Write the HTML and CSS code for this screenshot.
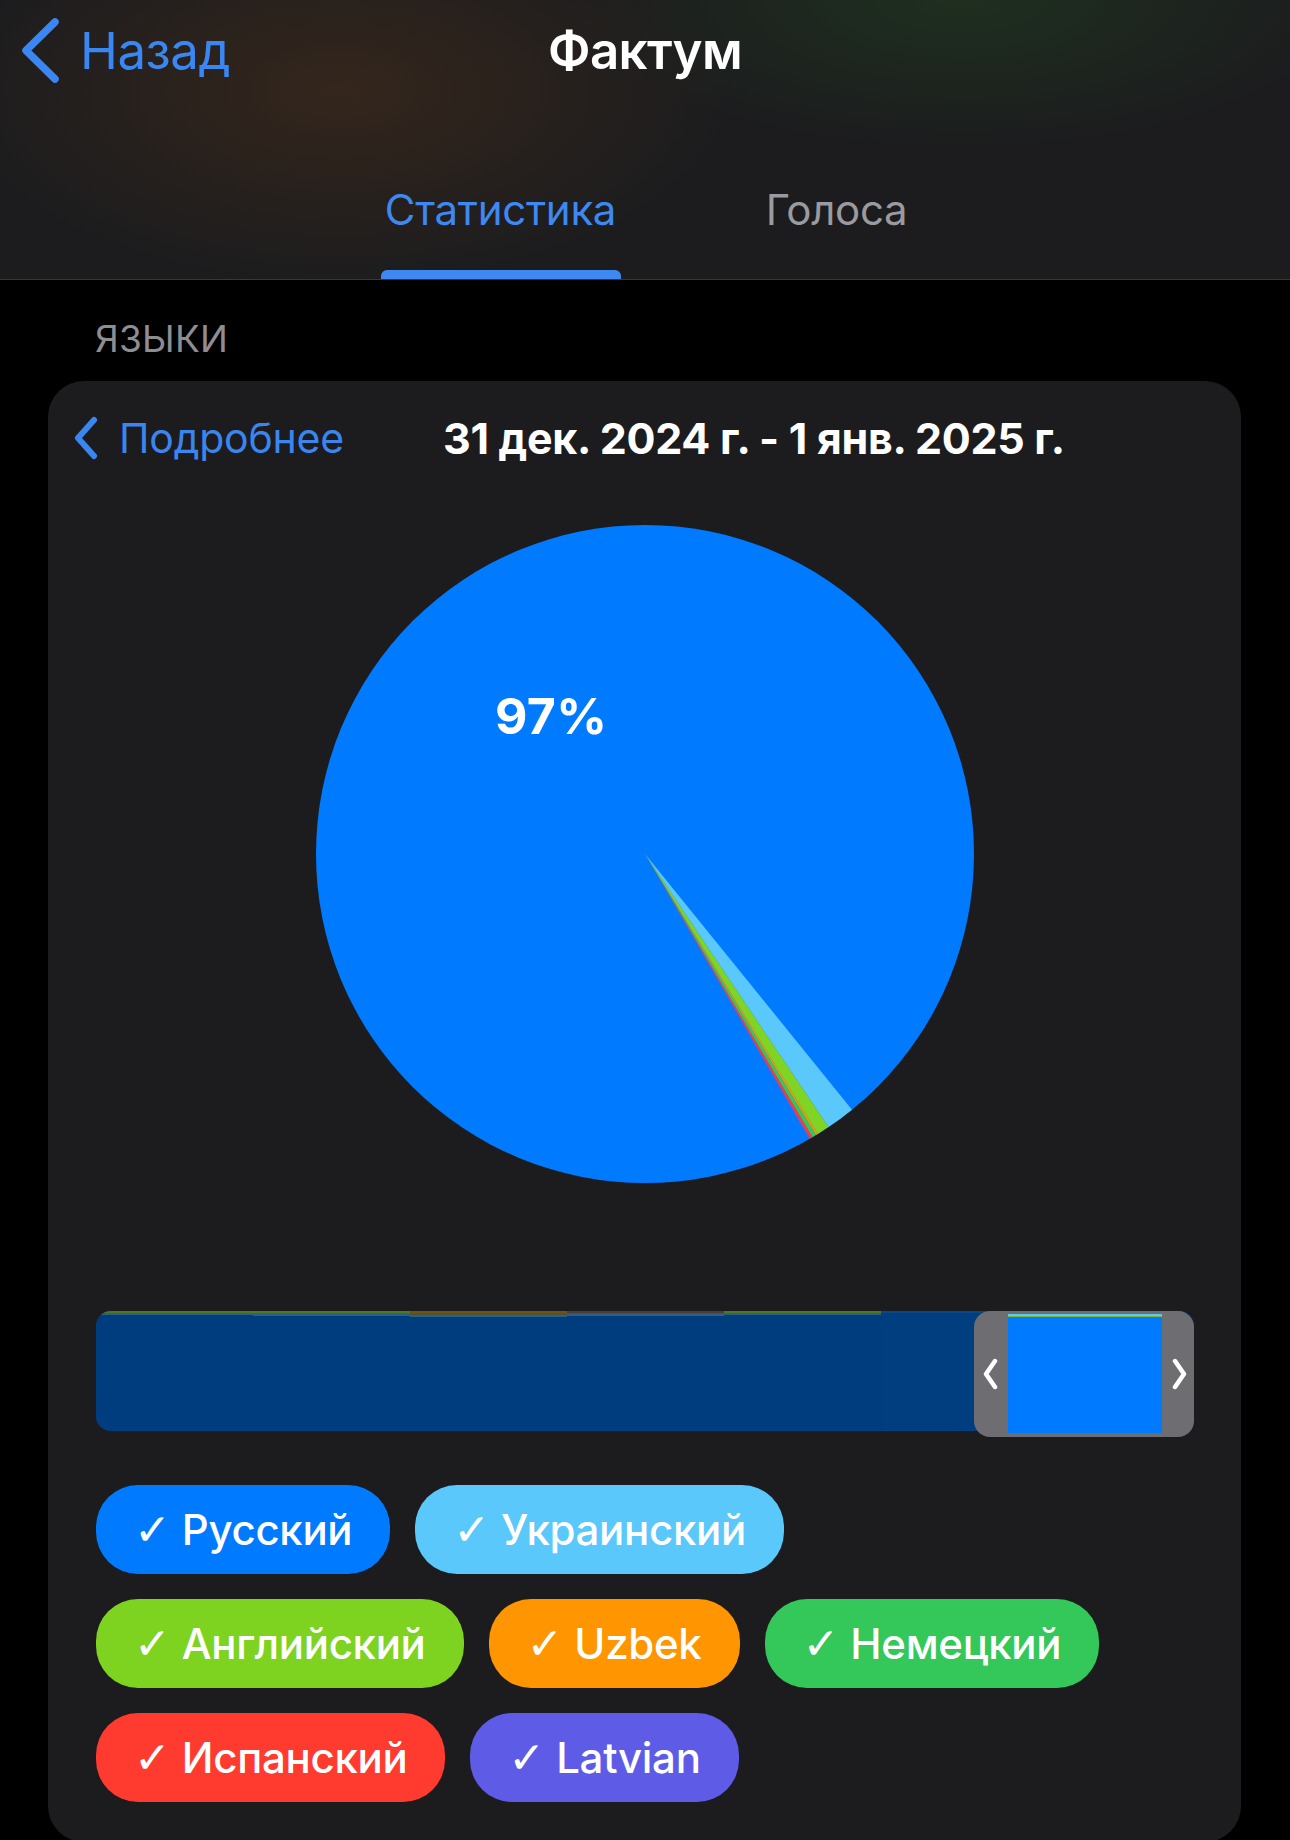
FILE: index.html
```html
<!DOCTYPE html>
<html lang="ru">
<head>
<meta charset="utf-8">
<title>Фактум</title>
<link rel="stylesheet" href="styles.css">
</head>
<body>
<div class="screen">
  <header class="top">
    <div class="nav">
      <a class="back">
        <svg class="back-chev" width="42" height="68" viewBox="0 0 42 68"><polyline points="35,5 6,33.5 35,62" fill="none" stroke="currentColor" stroke-width="7.5" stroke-linecap="round" stroke-linejoin="round"/></svg>
        <span class="back-text">Назад</span>
      </a>
      <h1 class="title">Фактум</h1>
      <span class="nav-spacer"></span>
    </div>
    <nav class="tabs">
      <div class="tab tab-stats active"><span class="tab-text">Статистика</span><i class="tab-bar"></i></div>
      <div class="tab tab-votes"><span class="tab-text">Голоса</span></div>
    </nav>
  </header>

  <main class="content">
    <div class="section-label">ЯЗЫКИ</div>
    <section class="card">
      <div class="card-head">
        <a class="more">
          <svg class="more-chev" width="26" height="44" viewBox="0 0 26 44"><polyline points="20,4 4,22 20,40" fill="none" stroke="currentColor" stroke-width="6" stroke-linecap="round" stroke-linejoin="round"/></svg>
          <span class="more-text">Подробнее</span>
        </a>
        <span class="range">31 дек. 2024 г. - 1 янв. 2025 г.</span>
      </div>

      <div class="pie-wrap">
        <svg class="pie" width="658" height="658" viewBox="0 0 658 658">
          <circle cx="329" cy="329" r="329" fill="#007aff"/>
          <path d="M329 329 L536.0 584.7 A329 329 0 0 1 512.5 602.1 Z" fill="#5ac8fa"/>
          <path d="M329 329 L512.5 602.1 A329 329 0 0 1 501.9 608.9 Z" fill="#80d424"/>
          <path d="M329 329 L501.9 608.9 A329 329 0 0 1 499.9 610.1 Z" fill="#ff9500"/>
          <path d="M329 329 L499.9 610.1 A329 329 0 0 1 496.5 612.2 Z" fill="#34c759"/>
          <path d="M329 329 L496.5 612.2 A329 329 0 0 1 494.0 613.6 Z" fill="#ff3b30"/>
          <path d="M329 329 L494.0 613.6 A329 329 0 0 1 493.0 614.2 Z" fill="#5e5ce6"/>
        </svg>
        <span class="pct">97%</span>
      </div>

      <div class="timeline">
        <div class="track">
          <div class="seg seg-a"></div>
          <div class="seg seg-b"></div>
          <div class="seg seg-c"></div>
          <div class="seg seg-d"></div>
          <div class="seg seg-e"></div>
          <div class="seg seg-f"></div>
        </div>
        <div class="handle">
          <svg class="h-chev" width="18" height="32" viewBox="0 0 18 32"><polyline points="13,3 4,16 13,29" fill="none" stroke="#fff" stroke-width="4.5" stroke-linecap="round" stroke-linejoin="round"/></svg>
          <div class="window"></div>
          <svg class="h-chev" width="18" height="32" viewBox="0 0 18 32"><polyline points="5,3 14,16 5,29" fill="none" stroke="#fff" stroke-width="4.5" stroke-linecap="round" stroke-linejoin="round"/></svg>
        </div>
      </div>

      <div class="chips">
        <span class="chip chip-ru"><span class="ck">✓</span> Русский</span>
        <span class="chip chip-uk"><span class="ck">✓</span> Украинский</span>
        <span class="chip chip-en"><span class="ck">✓</span> Английский</span>
        <span class="chip chip-uz"><span class="ck">✓</span> Uzbek</span>
        <span class="chip chip-de"><span class="ck">✓</span> Немецкий</span>
        <span class="chip chip-es"><span class="ck">✓</span> Испанский</span>
        <span class="chip chip-lv"><span class="ck">✓</span> Latvian</span>
      </div>
    </section>
  </main>
</div>
</body>
</html>
```

FILE: styles.css
```css
* { box-sizing: border-box; }

html, body {
  margin: 0;
  padding: 0;
  background: #000;
}

body {
  width: 1290px;
  height: 1840px;
  overflow: hidden;
  font-family: "Inter", "Noto Sans", "DejaVu Sans", sans-serif;
  color: #fff;
}

.screen {
  width: 1290px;
  height: 1840px;
  overflow: hidden;
  background: #000;
}

/* ---------- header ---------- */
.top {
  height: 280px;
  border-bottom: 1px solid #38383a;
  background:
    radial-gradient(ellipse 520px 260px at 340px 90px, rgba(72, 46, 26, 0.55), rgba(72, 46, 26, 0) 75%),
    radial-gradient(ellipse 520px 200px at 960px 0px, rgba(32, 62, 32, 0.55), rgba(32, 62, 32, 0) 75%),
    #1c1c1e;
}

.nav {
  height: 101px;
  display: grid;
  grid-template-columns: 1fr auto 1fr;
  align-items: center;
  padding: 0 20px;
}

.back {
  display: flex;
  align-items: center;
  gap: 18px;
  color: #3a87f3;
  justify-self: start;
}

.back-chev { display: block; }

.back-text {
  font-size: 51px;
  line-height: 60px;
  letter-spacing: -0.5px;
}

.title {
  margin: 0;
  font-size: 51px;
  line-height: 60px;
  font-weight: 600;
  letter-spacing: -0.6px;
  color: #fff;
}

.tabs {
  display: flex;
  justify-content: center;
  gap: 143px;
  margin-top: 79px;
}

.tab {
  display: flex;
  flex-direction: column;
  align-items: center;
}

.tab-stats { width: 240px; }
.tab-votes { width: 146px; }

.tab-text {
  font-size: 42px;
  line-height: 60px;
  color: #9a9a9f;
  white-space: nowrap;
  letter-spacing: -0.3px;
}

.tab.active .tab-text { color: #3d88f1; }

.tab-bar {
  display: block;
  width: 240px;
  height: 9px;
  margin-top: 30px;
  border-radius: 6px 6px 0 0;
  background: #3d88f1;
}

/* ---------- content ---------- */
.section-label {
  margin: 36px 0 0 95px;
  font-size: 37px;
  line-height: 45px;
  color: #8d8d92;
  letter-spacing: 0.2px;
}

.card {
  margin: 20px 0 0 48px;
  width: 1193px;
  background: #1c1c1e;
  border-radius: 36px;
  padding: 29px 47px 40px 48px;
}

.card-head {
  display: flex;
  align-items: center;
  height: 56px;
  margin-left: -22px;
}

.more {
  display: flex;
  align-items: center;
  gap: 19px;
  color: #3a86ee;
}

.more-chev { display: block; }

.more-text {
  font-size: 41px;
  line-height: 56px;
  letter-spacing: -0.2px;
}

.range {
  margin-left: 99px;
  font-size: 43px;
  line-height: 56px;
  font-weight: 700;
  color: #fff;
  white-space: nowrap;
  letter-spacing: -0.3px;
}

.pie-wrap {
  position: relative;
  width: 658px;
  height: 658px;
  margin: 59px auto 0;
}

.pie { display: block; }

.pct {
  position: absolute;
  left: 179px;
  top: 166px;
  font-size: 50px;
  line-height: 50px;
  font-weight: 700;
  color: #fff;
  letter-spacing: 0.3px;
}

/* ---------- timeline ---------- */
.timeline {
  position: relative;
  height: 126px;
  margin-top: 128px;
}

.track {
  display: flex;
  height: 120px;
  margin-top: 3px;
  border-radius: 15px;
  overflow: hidden;
  background: #003d7e;
}

.seg {
  width: 157px;
  flex: none;
  background: #003d7e;
}

.seg-a { background: linear-gradient(#4d7a1f 0 2px, #2e5f86 2px 4px, #003d7e 4px); }
.seg-b { background: linear-gradient(#4d7a1f 0 2px, #2e5f86 2px 5px, #003d7e 5px); }
.seg-c { background: linear-gradient(#7a4b1c 0 2px, #3f5c33 2px 4px, #2e5f86 4px 6px, #003d7e 6px); }
.seg-d { background: linear-gradient(#553b2c 0 2px, #3f5c33 2px 3px, #2e5f86 3px 5px, #003d7e 5px); }
.seg-e { background: linear-gradient(#4d7a1f 0 2px, #2e5f86 2px 4px, #003d7e 4px); }
.seg-f { flex: 1; background: linear-gradient(#0a4688 0 2px, #003e80 2px); }

.handle {
  position: absolute;
  left: 878px;
  top: 0;
  width: 220px;
  height: 126px;
  border-radius: 16px;
  background: #6e6d72;
  display: flex;
  align-items: center;
  justify-content: space-between;
  padding: 0 6px 0 8px;
}

.window {
  align-self: stretch;
  width: 154px;
  margin: 3px 0 4px;
  background: linear-gradient(#5ac8fa 0 2px, #7fb93a 2px 3px, #007aff 3px);
}

.h-chev { display: block; flex: none; }

/* ---------- chips ---------- */
.chips {
  display: flex;
  flex-wrap: wrap;
  gap: 25px;
  margin-top: 48px;
  width: 1040px;
}

.chip {
  display: inline-block;
  height: 89px;
  line-height: 89px;
  padding: 0 38px;
  border-radius: 42px;
  font-size: 42px;
  font-weight: 500;
  color: #fff;
  white-space: nowrap;
  letter-spacing: -0.3px;
}

.ck {
  font-family: "DejaVu Sans", sans-serif;
  font-size: 44px;
  font-weight: 700;
  letter-spacing: 0;
}

.chip-ru { background: #007aff; }
.chip-uk { background: #5ac8fa; }
.chip-en { background: #7ed321; }
.chip-uz { background: #ff9500; }
.chip-de { background: #34c759; }
.chip-es { background: #ff3b30; }
.chip-lv { background: #5e5ce6; }
```
